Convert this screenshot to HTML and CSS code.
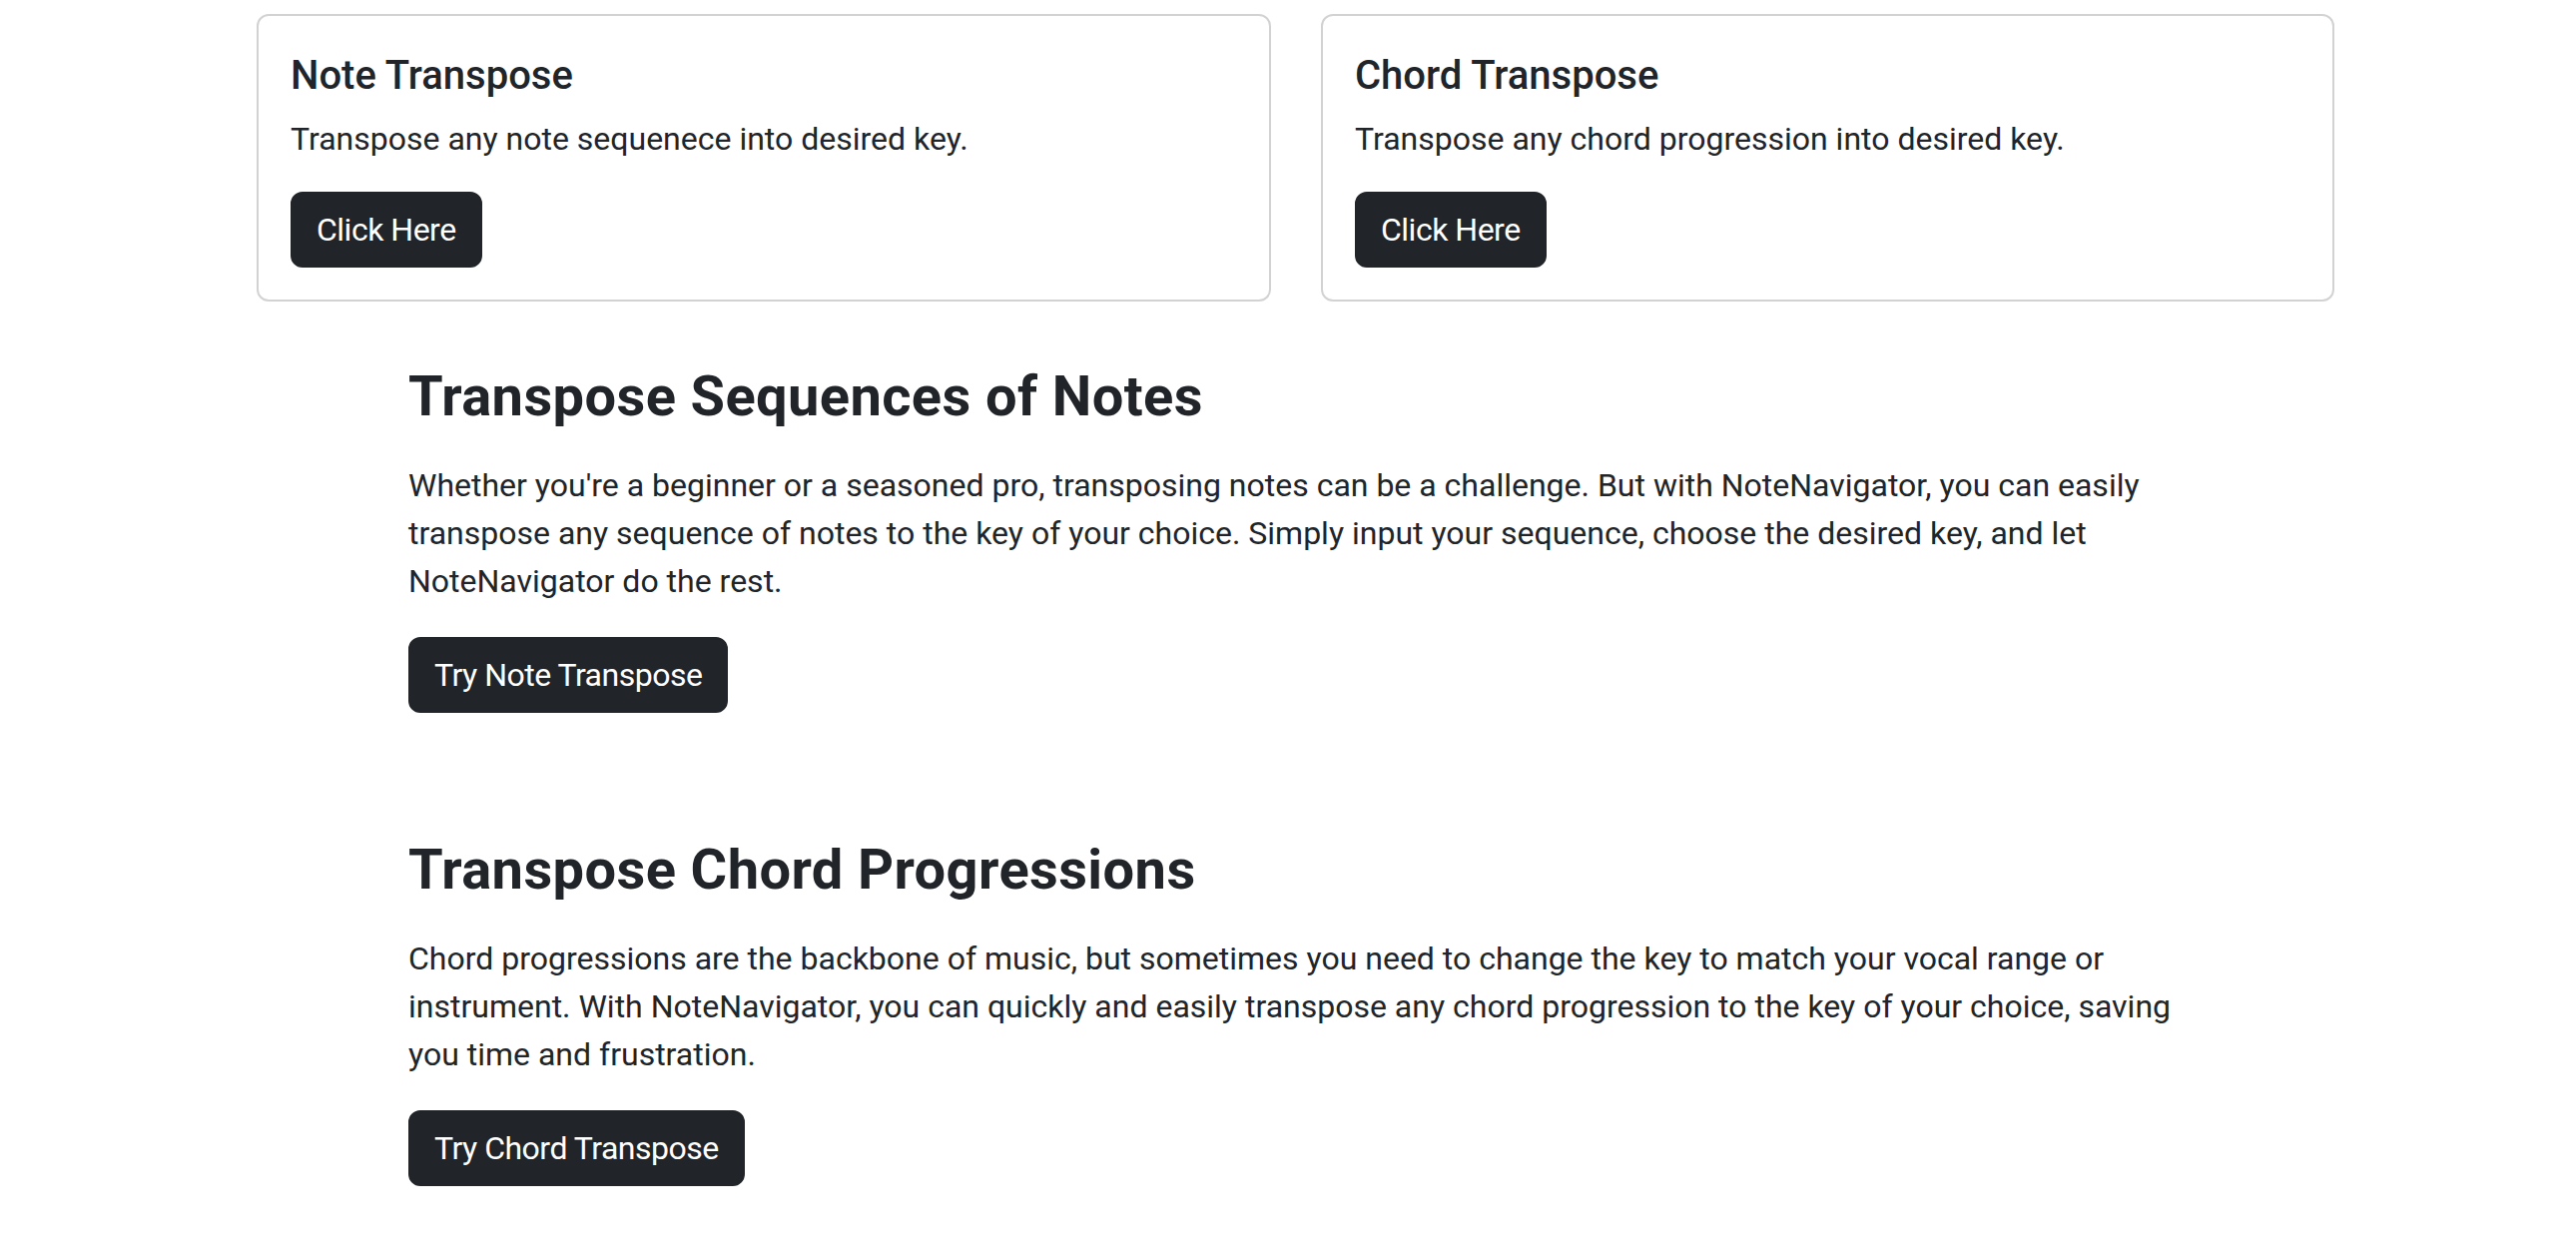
FILE: index.html
```html
<!DOCTYPE html>
<html lang="en">
<head>
<meta charset="utf-8">
<title>NoteNavigator</title>
<link rel="stylesheet" href="styles.css">
</head>
<body>
<div class="page">
  <div class="cards">
    <div class="card">
      <h5 class="card-title">Note Transpose</h5>
      <p class="card-text">Transpose any note sequenece into desired key.</p>
      <a class="btn" href="#">Click Here</a>
    </div>
    <div class="card">
      <h5 class="card-title">Chord Transpose</h5>
      <p class="card-text">Transpose any chord progression into desired key.</p>
      <a class="btn" href="#">Click Here</a>
    </div>
  </div>
  <div class="features">
    <section class="feature">
      <h2 class="feature-title">Transpose Sequences of Notes</h2>
      <p class="feature-text">Whether you're a beginner or a seasoned pro, transposing notes can be a challenge. But with NoteNavigator, you can easily transpose any sequence of notes to the key of your choice. Simply input your sequence, choose the desired key, and let NoteNavigator do the rest.</p>
      <a class="btn" href="#">Try Note Transpose</a>
    </section>
    <section class="feature">
      <h2 class="feature-title">Transpose Chord Progressions</h2>
      <p class="feature-text">Chord progressions are the backbone of music, but sometimes you need to change the key to match your vocal range or instrument. With NoteNavigator, you can quickly and easily transpose any chord progression to the key of your choice, saving you time and frustration.</p>
      <a class="btn" href="#">Try Chord Transpose</a>
    </section>
  </div>
</div>
</body>
</html>
```
FILE: styles.css
```css
* { box-sizing: border-box; }
html, body { margin: 0; padding: 0; background: #fff; }
body {
  font-family: Roboto, "Liberation Sans", Arial, sans-serif;
  font-size: 32px;
  line-height: 48px;
  color: #212529;
}
.page {
  padding: 14px 0 60px 257px;
}
.cards {
  display: grid;
  grid-template-columns: 1016px 1015px;
  gap: 50px;
}
.card {
  border: 2px solid rgba(0, 0, 0, 0.175);
  border-radius: 12px;
  padding: 32px;
  display: flex;
  flex-direction: column;
  align-items: flex-start;
}
.card-title {
  margin: 0 0 15px;
  padding-top: 4px;
  font-size: 40px;
  line-height: 48px;
  font-weight: 500;
}
.card-text {
  margin: 0 0 29px;
}
.btn {
  display: inline-block;
  padding: 12px 24px;
  border: 2px solid #212529;
  border-radius: 12px;
  background: #212529;
  color: #fff;
  font-size: 32px;
  line-height: 48px;
  letter-spacing: -0.5px;
  text-decoration: none;
}
.features {
  display: flex;
  flex-direction: column;
  gap: 122px;
  margin: 60px 0 0 152px;
  width: 1800px;
}
.feature {
  display: flex;
  flex-direction: column;
  align-items: flex-start;
}
.feature-title {
  margin: 0 0 31px;
  padding-top: 2px;
  font-size: 56px;
  line-height: 67px;
  font-weight: 700;
  letter-spacing: 0.4px;
}
.feature-text {
  margin: 0 0 32px;
}
```
